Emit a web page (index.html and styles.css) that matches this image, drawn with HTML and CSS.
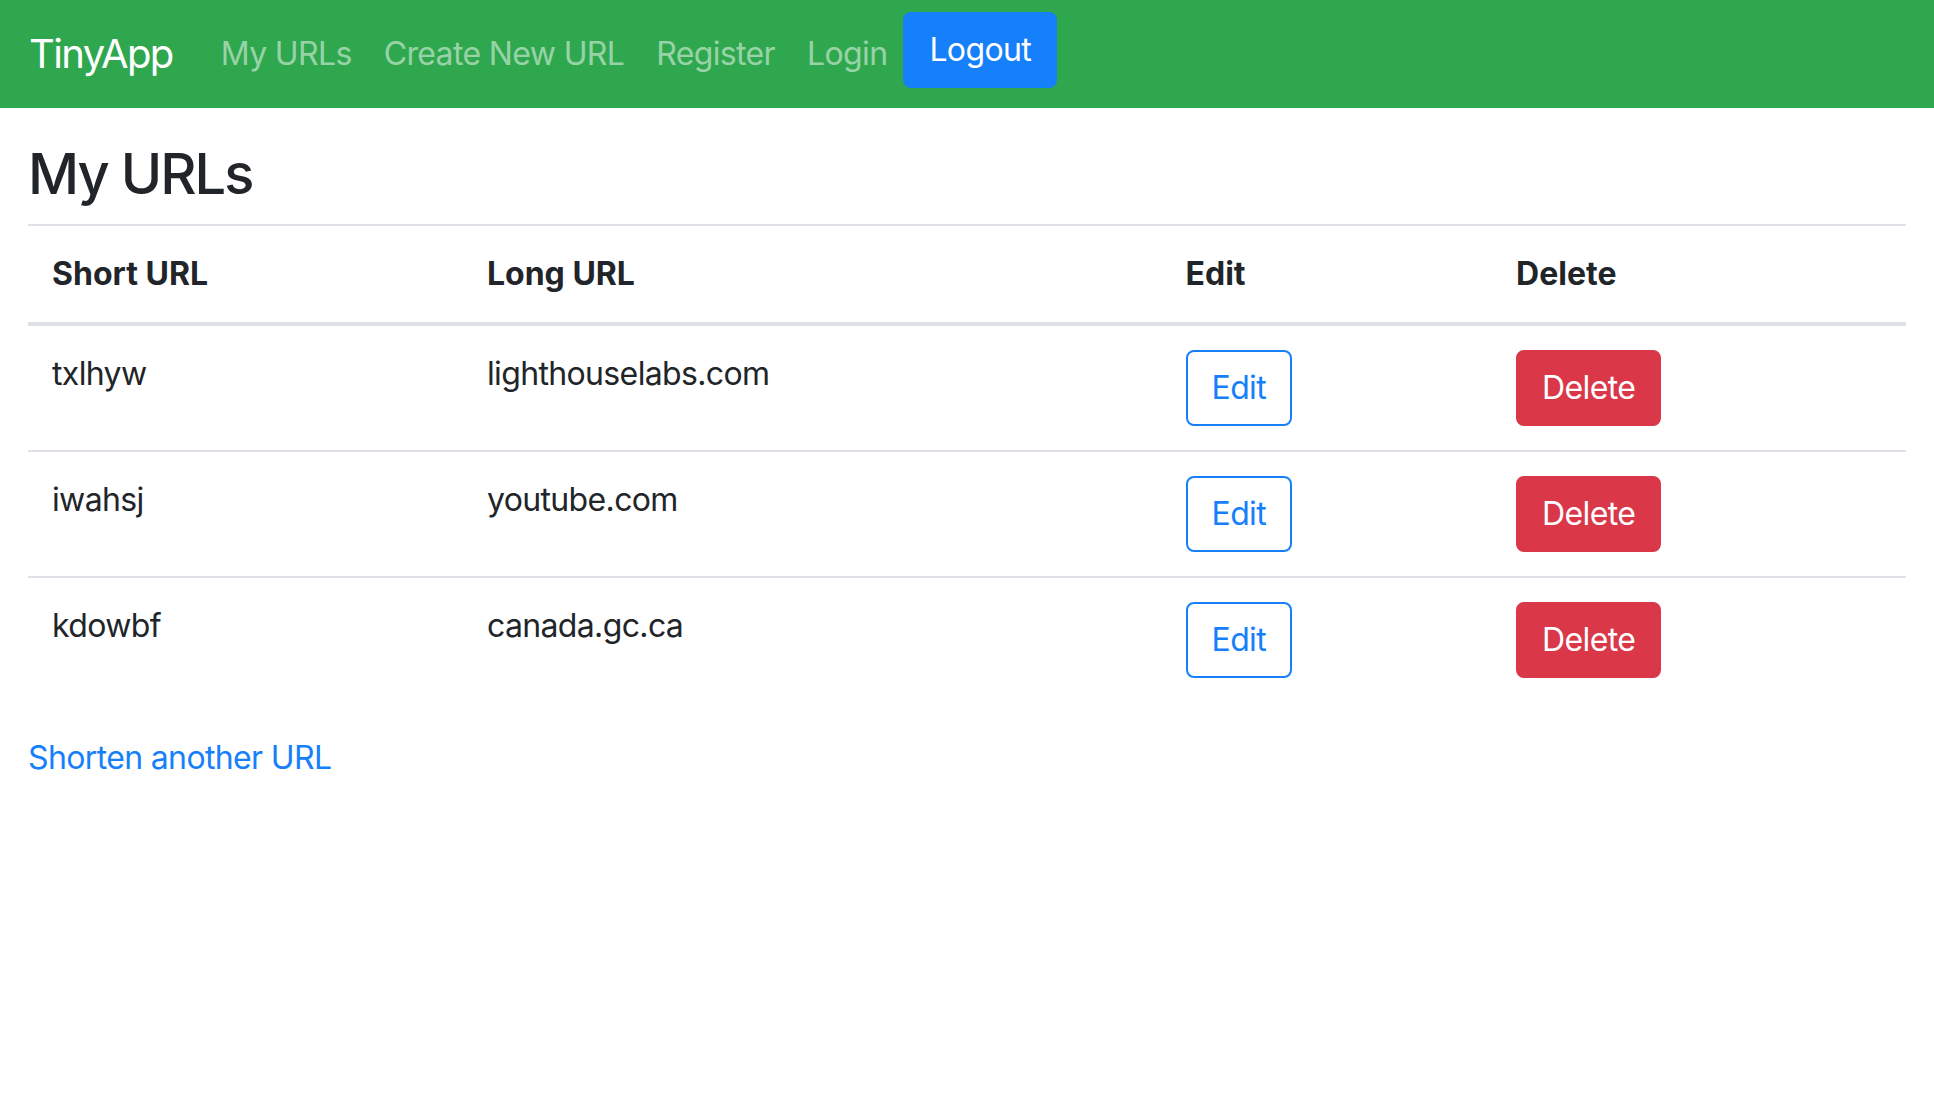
FILE: index.html
```html
<!DOCTYPE html>
<html lang="en">
<head>
<meta charset="utf-8">
<title>TinyApp</title>
<link rel="stylesheet" href="styles.css">
</head>
<body>
<nav class="navbar">
  <a class="brand" href="#">TinyApp</a>
  <div class="nav-items">
    <a class="nav-link" href="#">My URLs</a>
    <a class="nav-link" href="#">Create New URL</a>
    <a class="nav-link" href="#">Register</a>
    <a class="nav-link" href="#">Login</a>
    <button class="btn btn-primary logout" type="button">Logout</button>
  </div>
</nav>
<main class="container">
  <h3 class="title">My URLs</h3>
  <table class="table">
    <thead>
      <tr>
        <th class="col-short">Short URL</th>
        <th class="col-long">Long URL</th>
        <th class="col-edit">Edit</th>
        <th class="col-delete">Delete</th>
      </tr>
    </thead>
    <tbody>
      <tr>
        <td>txlhyw</td>
        <td>lighthouselabs.com</td>
        <td><button class="btn btn-outline" type="button">Edit</button></td>
        <td><button class="btn btn-danger" type="button">Delete</button></td>
      </tr>
      <tr>
        <td>iwahsj</td>
        <td>youtube.com</td>
        <td><button class="btn btn-outline" type="button">Edit</button></td>
        <td><button class="btn btn-danger" type="button">Delete</button></td>
      </tr>
      <tr>
        <td>kdowbf</td>
        <td>canada.gc.ca</td>
        <td><button class="btn btn-outline" type="button">Edit</button></td>
        <td><button class="btn btn-danger" type="button">Delete</button></td>
      </tr>
    </tbody>
  </table>
  <a class="link" href="#">Shorten another URL</a>
</main>
</body>
</html>
```
FILE: styles.css
```css
* { box-sizing: border-box; }
html, body {
  margin: 0;
  padding: 0;
  background: #ffffff;
  color: #212529;
  font-family: Inter, "Noto Sans", "Liberation Sans", sans-serif;
  font-size: 32px;
  line-height: 48px;
  letter-spacing: -0.02em;
}
a { text-decoration: none; }

.navbar {
  display: flex;
  align-items: center;
  height: 108px;
  padding: 0 28px;
  background: #2fa74e;
}
.brand {
  color: #ffffff;
  font-size: 40px;
  line-height: 60px;
  letter-spacing: -0.04em;
  margin-right: 32px;
  margin-left: 1px;
}
.nav-items {
  display: flex;
  align-items: center;
}
.nav-link {
  color: rgba(255, 255, 255, 0.5);
  padding: 16px 16px;
}
.btn {
  display: inline-block;
  font-family: inherit;
  font-size: 32px;
  line-height: 48px;
  letter-spacing: -0.02em;
  padding: 12px 24px;
  border: 2px solid transparent;
  border-radius: 8px;
  cursor: pointer;
}
.btn-primary {
  background: #1680fb;
  border-color: #1680fb;
  color: #ffffff;
}
.logout {
  margin-bottom: 8px;
}
.btn-outline {
  background: #ffffff;
  border-color: #1680fb;
  color: #1680fb;
}
.btn-danger {
  background: #da3749;
  border-color: #da3749;
  color: #ffffff;
}

.container {
  padding: 33px 28px 0;
}
.title {
  margin: 0 0 16px;
  font-size: 56px;
  line-height: 67px;
  font-weight: 500;
  letter-spacing: -0.035em;
}
.table {
  width: 100%;
  border-collapse: collapse;
  margin-bottom: 32px;
}
.table th, .table td {
  text-align: left;
  vertical-align: top;
  padding: 24px;
  border-top: 2px solid #dee2e6;
}
.table th {
  font-weight: 700;
  letter-spacing: 0;
  border-bottom: 4px solid #dee2e6;
}
.col-short { width: 23.16%; }
.col-long { width: 37.2%; }
.col-edit { width: 17.6%; }
.col-delete { width: 22.04%; }
.link {
  color: #1680fb;
}
```
